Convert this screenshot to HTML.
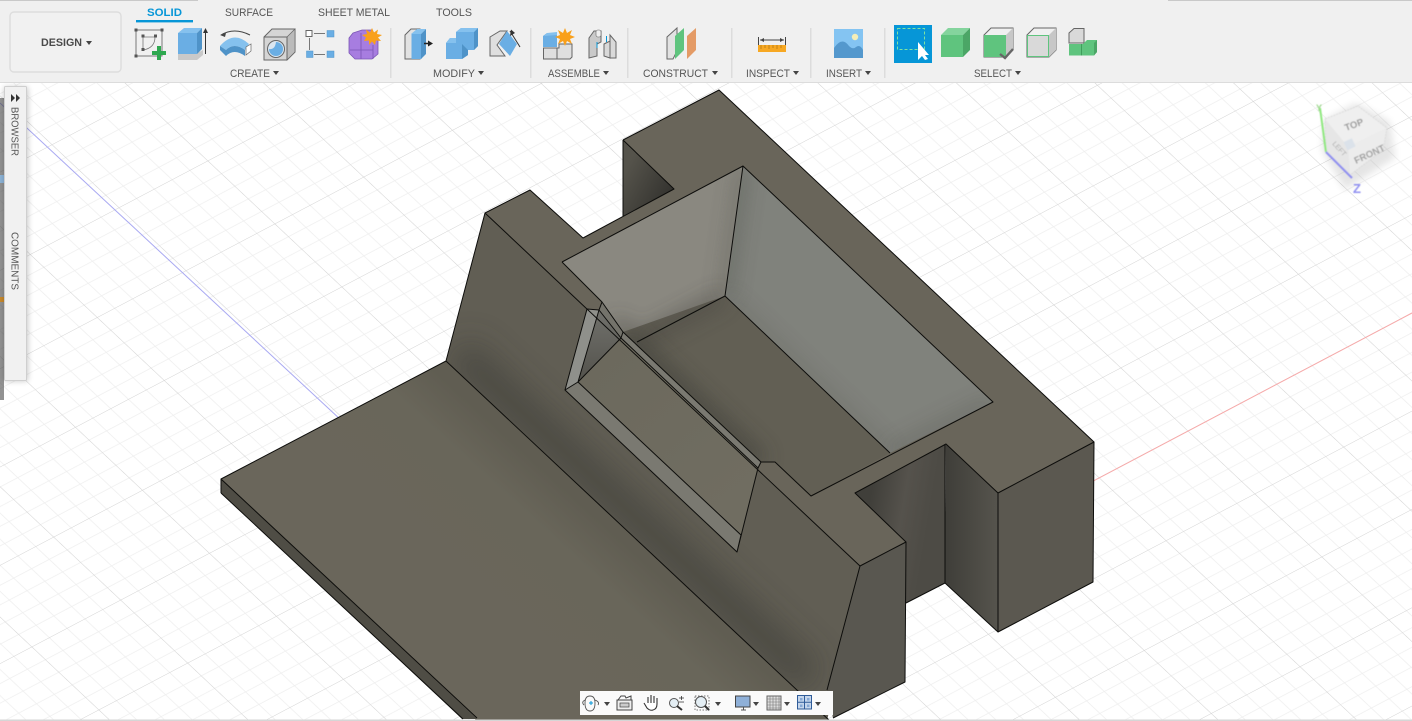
<!DOCTYPE html>
<html><head><meta charset="utf-8"><title>Design</title>
<style>
html,body{margin:0;padding:0;width:1412px;height:721px;overflow:hidden;background:#fff}
svg{display:block}
text{font-family:"Liberation Sans",sans-serif;font-size:11px;fill:#555}
.e{stroke:#0d0d0b;stroke-width:1;stroke-linejoin:round;fill:none}
</style></head><body>
<svg width="1412" height="721" viewBox="0 0 1412 721" xmlns="http://www.w3.org/2000/svg">
<defs>
<pattern id="grid" patternUnits="userSpaceOnUse" width="100" height="100" patternTransform="matrix(.888 -.468 -.67 -.63 655 712)">
<path d="M20 0V100M40 0V100M60 0V100M80 0V100M0 20H100M0 40H100M0 60H100M0 80H100" fill="none" stroke="#eeeeee" stroke-width=".8"/>
<path d="M0 0V100M0 0H100" fill="none" stroke="#d2d2d2" stroke-width="1.1"/>
</pattern>
<linearGradient id="plate" gradientUnits="userSpaceOnUse" x1="500" y1="430" x2="400" y2="540"><stop offset="0" stop-color="#605d52"/><stop offset=".3" stop-color="#69665a"/><stop offset="1" stop-color="#6a665b"/></linearGradient>
<linearGradient id="csink" gradientUnits="userSpaceOnUse" x1="610" y1="350" x2="740" y2="500"><stop offset="0" stop-color="#6c695d"/><stop offset="1" stop-color="#706d61"/></linearGradient>
<linearGradient id="tri" gradientUnits="userSpaceOnUse" x1="600" y1="315" x2="600" y2="375"><stop offset="0" stop-color="#6f6f6a"/><stop offset="1" stop-color="#56554f"/></linearGradient>
<linearGradient id="notch" gradientUnits="userSpaceOnUse" x1="870" y1="500" x2="930" y2="510"><stop offset="0" stop-color="#403f3a"/><stop offset=".55" stop-color="#55524c"/><stop offset="1" stop-color="#4d4b45"/></linearGradient>
<linearGradient id="nw2" gradientUnits="userSpaceOnUse" x1="948" y1="500" x2="998" y2="500"><stop offset="0" stop-color="#403f3a"/><stop offset="1" stop-color="#56544d"/></linearGradient>
<linearGradient id="bnotch" gradientUnits="userSpaceOnUse" x1="625" y1="170" x2="670" y2="195"><stop offset="0" stop-color="#55534b"/><stop offset="1" stop-color="#34332f"/></linearGradient>
<filter id="sh" x="-40%" y="-5%" width="180%" height="110%"><feGaussianBlur stdDeviation="3"/></filter>
<filter id="b1" x="-30%" y="-30%" width="160%" height="160%"><feGaussianBlur stdDeviation="4"/></filter>
<filter id="b10" filterUnits="userSpaceOnUse" x="200" y="80" width="1000" height="640"><feGaussianBlur stdDeviation="10"/></filter>
<filter id="b16" filterUnits="userSpaceOnUse" x="200" y="80" width="1000" height="640"><feGaussianBlur stdDeviation="16"/></filter>
<filter id="cb" x="-10%" y="-10%" width="120%" height="120%"><feGaussianBlur stdDeviation=".45"/></filter>
<clipPath id="cS"><polygon points="485,213 860,566 827,721 797,690 446,361"/></clipPath>
<clipPath id="cL"><polygon points="562,262 743,166 725,296 637,342 623,332 602,302"/></clipPath>
<clipPath id="cR"><polygon points="743,166 993,402 890,453 725,296"/></clipPath>
<clipPath id="cF"><polygon points="623,332 725,296 890,453 811,496 775,462 761,462"/></clipPath>
</defs>

<!-- viewport -->
<rect width="1412" height="721" fill="#fff"/>
<rect y="82" width="1412" height="639" fill="url(#grid)"/>
<path d="M0 103L655 712" stroke="#a9a9f2" stroke-width="1"/>
<path d="M655 712L1412 313" stroke="#f7a9a9" stroke-width="1"/>

<!-- plate -->
<polygon points="221,479 446,361 830,721 477,721" fill="url(#plate)"/>
<polygon points="221,479 221,493 462,719 477,719" fill="#4f4d45"/>
<path class="e" d="M221 493V479L446 361M221 479L477 718M221 493L463 719"/>

<!-- sloped front -->
<polygon points="485,213 860,566 827,721 797,690 446,361" fill="#615e54"/>
<g clip-path="url(#cS)"><path d="M458 352L810 680" stroke="#3d3c37" stroke-width="34" fill="none" opacity=".62" filter="url(#b16)"/></g>
<path class="e" d="M446 361L485 213M446 361L830 721"/>
<!-- right end -->
<polygon points="860,566 906,542 905,682 833,718 827,690" fill="#595750"/>
<!-- notch -->
<polygon points="855,493 946,444 945,583 906,603 906,542" fill="url(#notch)"/>
<polygon points="946,444 998,493 998,632 945,583" fill="url(#nw2)"/>
<polygon points="998,493 1094,442 1093,582 998,632" fill="#5b5850"/>
<!-- top surface -->
<polygon points="623,140 719,90 1094,442 998,493 946,444 855,493 906,542 860,566 485,213 530,190 583,238 674,189" fill="#69655a"/>
<!-- back notch -->
<polygon points="623,140 674,189 623,216" fill="url(#bnotch)"/>
<!-- pocket left wall -->
<polygon points="562,262 743,166 725,296 637,342 623,332 602,302" fill="#8a8880"/>
<g clip-path="url(#cL)">
<path d="M725 296L637 342L615 322" stroke="#44433d" stroke-width="10" fill="none" opacity=".75" filter="url(#b10)"/>
<path d="M743 166L725 296" stroke="#53524c" stroke-width="8" fill="none" opacity=".6" filter="url(#b10)"/>
</g>
<!-- pocket right wall -->
<polygon points="743,166 993,402 890,453 725,296" fill="#80827c"/>
<g clip-path="url(#cR)">
<path d="M743 166L725 296" stroke="#50524e" stroke-width="10" fill="none" opacity=".6" filter="url(#b10)"/>
<path d="M725 296L890 453" stroke="#494944" stroke-width="6" fill="none" opacity=".45" filter="url(#b10)"/>
<path d="M890 453L993 402" stroke="#4a4a45" stroke-width="8" fill="none" opacity=".5" filter="url(#b10)"/>
</g>
<!-- pocket floor -->
<polygon points="623,332 725,296 890,453 811,496 775,462 761,462" fill="#625f54"/>
<g clip-path="url(#cF)">
<path d="M725 296L637 342" stroke="#46453f" stroke-width="12" fill="none" opacity=".6" filter="url(#b10)"/>
<path d="M623 332L761 462" stroke="#41403a" stroke-width="16" fill="none" opacity=".7" filter="url(#b10)"/>
</g>
<!-- countersink -->
<polygon points="621,338 758,468 741,535 578,382" fill="url(#csink)"/>
<polygon points="565,390 578,382 741,535 737,552" fill="#7a7971"/>
<polygon points="565,390 587,309 599,310 578,382" fill="#8f908b"/>
<polygon points="599,310 621,338 578,382" fill="url(#tri)"/>
<polygon points="602,302 623,332 621,338 599,310" fill="#74736b"/>
<polygon points="623,332 761,462 758,468 621,338" fill="#7a7971"/>
<path class="e" d="M623 140L719 90L1094 442L998 493L946 444L855 493L906 542L860 566L485 213L530 190L583 238L674 189L623 140M623 140V216"/>
<path class="e" d="M562 262L743 166L993 402L811 496L775 462L761 462L758 468M562 262L602 302L623 332L761 462M743 166L725 296L890 453M725 296L637 342"/>
<path class="e" d="M587 309L565 390L737 552L741 535L578 382L599 310L587 309M599 310L602 302M599 310L621 338L578 382L565 390M623 332L621 338L758 468M737 552L758 468"/>
<path class="e" d="M1094 442L1093 582L998 632V493M998 632L945 583V444M906 542L905 682L833 718M860 566L827 690M906 603L945 583"/>

<!-- viewcube -->
<polygon points="1322,150 1345,190 1395,158 1390,122 1356,103 1325,120" fill="#000" opacity=".1" filter="url(#b1)"/>
<g filter="url(#cb)">
<polygon points="1325,119 1358,106 1387,128 1348,147" fill="#efefef"/>
<polygon points="1325,119 1348,147 1350,175 1326,152" fill="#e6e6e6"/>
<polygon points="1348,147 1387,128 1383,150 1350,175" fill="#ececec"/>
<path d="M1325 119L1358 106L1387 128L1383 150L1350 175L1326 152Z" fill="none" stroke="#d8d8d8" stroke-width=".8" stroke-dasharray="2 1"/>
<rect x="1345" y="140" width="9" height="9" fill="#dbe2ea" transform="rotate(-25 1349 144)"/>
<path d="M1320 108L1326 152" stroke="#8fe87f" stroke-width="2"/>
<path d="M1326 152L1352 178" stroke="#8f8ff0" stroke-width="2"/>
<text x="1316" y="111" style="font-size:9px;fill:#9ed88e;font-weight:bold">Y</text>
<text x="1353" y="193" style="font-size:13px;fill:#8f8ff0;font-weight:bold">Z</text>
<text transform="translate(1346,131) rotate(-20)" style="font-size:9.5px;fill:#999;font-weight:bold">TOP</text>
<text transform="translate(1356,164) rotate(-25)" style="font-size:9.5px;fill:#a0a0a0;font-weight:bold">FRONT</text>
<text transform="translate(1332,144) rotate(48)" style="font-size:7px;fill:#aaa">LEFT</text>
</g>

<!-- toolbar -->
<rect width="1412" height="82" fill="#f0f0f0"/>
<rect y="82" width="1412" height="1" fill="#dcdcdc"/>
<rect width="198" height="1" fill="#c9c9c9"/>
<rect x="1168" width="244" height="1" fill="#c9c9c9"/>
<rect x="10" y="12" width="111" height="60" rx="4" fill="#f1f1f1" stroke="#dddddd" stroke-width="1.4"/>
<text x="41" y="46" textLength="41" lengthAdjust="spacingAndGlyphs" style="font-weight:bold;fill:#4a4a4a">DESIGN</text>
<polygon points="86,41 92,41 89,45" fill="#444"/>
<text x="147" y="16" textLength="35" lengthAdjust="spacingAndGlyphs" style="font-weight:bold;fill:#0696d7">SOLID</text>
<rect x="136" y="20" width="57" height="2.4" fill="#0696d7"/>
<text x="225" y="16" textLength="48" lengthAdjust="spacingAndGlyphs">SURFACE</text>
<text x="318" y="16" textLength="72" lengthAdjust="spacingAndGlyphs">SHEET METAL</text>
<text x="436" y="16" textLength="36" lengthAdjust="spacingAndGlyphs">TOOLS</text>
<g fill="#dcdcdc"><rect x="390" y="28" width="1.5" height="50"/><rect x="530" y="28" width="1.5" height="50"/><rect x="627" y="28" width="1.5" height="50"/><rect x="731" y="28" width="1.5" height="50"/><rect x="810" y="28" width="1.5" height="50"/><rect x="884" y="28" width="1.5" height="50"/></g>
<text x="230" y="77" textLength="40" lengthAdjust="spacingAndGlyphs">CREATE</text>
<text x="433" y="77" textLength="42" lengthAdjust="spacingAndGlyphs">MODIFY</text>
<text x="548" y="77" textLength="52" lengthAdjust="spacingAndGlyphs">ASSEMBLE</text>
<text x="643" y="77" textLength="65" lengthAdjust="spacingAndGlyphs">CONSTRUCT</text>
<text x="746" y="77" textLength="44" lengthAdjust="spacingAndGlyphs">INSPECT</text>
<text x="826" y="77" textLength="36" lengthAdjust="spacingAndGlyphs">INSERT</text>
<text x="974" y="77" textLength="38" lengthAdjust="spacingAndGlyphs">SELECT</text>
<g fill="#444"><polygon points="273,71 279,71 276,75"/><polygon points="478,71 484,71 481,75"/><polygon points="603,71 609,71 606,75"/><polygon points="712,71 718,71 715,75"/><polygon points="793,71 799,71 796,75"/><polygon points="865,71 871,71 868,75"/><polygon points="1015,71 1021,71 1018,75"/></g>

<!-- sketch -->
<rect x="136" y="30" width="26" height="26" fill="none" stroke="#777" stroke-width="1"/>
<path d="M143 37H155Q155 48 143 50Z" fill="none" stroke="#777" stroke-width=".8"/>
<g fill="#555"><rect x="134.5" y="28.5" width="3" height="3"/><rect x="160.5" y="28.5" width="3" height="3"/><rect x="134.5" y="54.5" width="3" height="3"/><rect x="141.5" y="34.5" width="3" height="3"/><rect x="154" y="34.5" width="3" height="3"/><rect x="141.5" y="48" width="3" height="3"/></g>
<path d="M159 46V60M152 53H166" stroke="#2ea84f" stroke-width="4"/>
<!-- extrude -->
<polygon points="178,53 197,53 203,50 203,55 197,60 178,60" fill="#c9c9c9"/>
<polygon points="178,33 184,28 202,28 197,33" fill="#85c1ee"/>
<rect x="178" y="33" width="19" height="21" fill="#6aaee4"/>
<polygon points="197,33 202,28 202,49 197,54" fill="#4f93c8"/>
<path d="M205.5 54V31" stroke="#333" stroke-width="1"/><polygon points="205.5,28 203,33 208,33" fill="#333"/>
<!-- revolve -->
<path d="M221 35Q234 27 250 35" fill="none" stroke="#444" stroke-width="1"/><polygon points="220,35 226,33 225,37" fill="#444"/>
<path d="M220 46Q234 30 249 44L245 50Q234 42 226 50Z" fill="#85c1ee"/>
<path d="M220 46V50L226 56V50ZM226 50Q234 42 245 50V56Q234 48 226 56Z" fill="#4f93c8"/>
<polygon points="246,47 251,44 251,51 246,55" fill="#fff" stroke="#666" stroke-width=".7"/>
<!-- hole -->
<polygon points="264,37 272,29 295,29 295,52 287,60 264,60" fill="#d5d5d5" stroke="#666"/>
<polygon points="287,37 295,29 295,52 287,60" fill="#bbb" stroke="#666" stroke-width=".7"/>
<path d="M264 37H287V60" fill="none" stroke="#666"/>
<circle cx="276" cy="49" r="8.5" fill="#dbe6f0" stroke="#666"/>
<path d="M276 42A7 7 0 1 1 269 49Q275 50 276 42Z" fill="#6aaee4"/>
<!-- pattern -->
<path d="M314 33.5H325M309.5 38V50M314 54.5H325" stroke="#777"/>
<rect x="306" y="30.5" width="6" height="6" fill="#fff" stroke="#666"/><rect x="327" y="30.5" width="7" height="6.5" fill="#6aaee4" stroke="#4f93c8" stroke-width=".5"/><rect x="306.5" y="51" width="6.5" height="6.5" fill="#6aaee4" stroke="#4f93c8" stroke-width=".5"/><rect x="327" y="51" width="7" height="6.5" fill="#6aaee4" stroke="#4f93c8" stroke-width=".5"/>
<!-- purple -->
<path d="M353 33L362 30H372L378 40V54L372 59H355L349 53V38Z" fill="#a77de0" stroke="#7b55b5" stroke-width=".8"/>
<path d="M350 50H373M361 33V59M373 45V59" stroke="#7b55b5" stroke-width=".8"/>
<polygon points="372,28 374,32.5 378,29.5 377,34 382,35 378,37.5 381,41 376,40.5 375,45 372,41.5 369,45 369,40.5 364,41 366,37.5 362,35 367,34 366,29.5 370,32.5" fill="#f9a01b"/>
<!-- press pull -->
<polygon points="405,35 411,29 420,29 420,59 405,59" fill="#e2e2e2" stroke="#666"/>
<polygon points="411,34 417,29 426,29 421,34" fill="#85c1ee"/>
<rect x="411.5" y="34" width="10" height="25" fill="#6aaee4"/>
<polygon points="421,34 426,29 426,54 421,59" fill="#4f93c8"/>
<path d="M424 43.5H431" stroke="#222" stroke-width="1.5"/><polygon points="433,43.5 428,40.5 428,46.5" fill="#222"/>
<!-- fillet -->
<path d="M446 43L450 38H456V32L461 28H478V46L474 50H468V55L462 59H446Z" fill="#6aaee4"/>
<path d="M474 32V50L478 46V28Z" fill="#4f93c8"/><path d="M462 44V59L468 55V50Z" fill="#4f93c8"/>
<path d="M456 32L461 28H478L474 32ZM446 43L450 38H456V43Z" fill="#85c1ee"/>
<!-- chamfer -->
<polygon points="490,37 500,31 507,31 497,45 505,56 490,56" fill="#dfdfdf" stroke="#666"/>
<polygon points="507,31 517,44 510,56 499,44" fill="#6aaee4"/>
<path d="M510 31L520 47" stroke="#333" stroke-width="1"/><polygon points="511,29.5 510,36 515,33" fill="#333"/>
<!-- assemble -->
<path d="M543.5 48V59H570L572 57V44H559V48Z" fill="#dfdfdf" stroke="#666"/><path d="M557 48V59" stroke="#666"/>
<polygon points="543,36 547,33 557,33 557,47 543,47" fill="#6aaee4"/>
<polygon points="547,33 557,32 557,35 544,36" fill="#85c1ee"/>
<polygon points="565,28 567,33 572,30 570,35 575,37 570,39 572,44 567,41 565,46 563,41 558,44 560,39 555,37 560,35 558,30 563,33" fill="#f9a01b"/>
<!-- joint -->
<path d="M589 38L594 31H601V42L597 44V56L589 58Z" fill="#c9c9c9" stroke="#666"/>
<rect x="596" y="30" width="5" height="7" rx="2" fill="#eee" stroke="#666" stroke-width=".6"/>
<path d="M604 44L610 41V58L604 56ZM610 35L616 42V58L610 58Z" fill="#d9d9d9" stroke="#666"/>
<path d="M597 42V48M606.5 36V42" stroke="#0696d7" stroke-width="1"/>
<!-- construct -->
<polygon points="667,37 677,28 677,51 673,59 667,59" fill="#e2e2e2" stroke="#666"/>
<polygon points="675,36 675,59 684,50 684,28" fill="#5fc47e"/>
<polygon points="687,36 696,28 696,50 687,59" fill="#e49b66"/>
<!-- inspect -->
<rect x="758" y="45" width="28" height="7" fill="#f7a823"/>
<path d="M761 45V49M765 45V48M769 45V49M773 45V48M777 45V49M781 45V48" stroke="#9c6a10" stroke-width=".6"/>
<path d="M758.5 37V45M785.5 37V45M760 40H784" stroke="#444" stroke-width="1" fill="none"/>
<polygon points="760,40 764,38 764,42" fill="#444"/><polygon points="784,40 780,38 780,42" fill="#444"/>
<!-- insert -->
<rect x="834" y="29" width="29" height="29" fill="#84c4f2"/>
<path d="M834 58V48Q842 36 849 46Q853 50 856 47Q860 44 863 50V58Z" fill="#5498cd"/>
<circle cx="855" cy="37" r="3.2" fill="#f5eeb8"/>
<!-- select active -->
<rect x="894" y="25" width="38" height="38" fill="#0696d7"/>
<rect x="897.5" y="28.5" width="27" height="21" fill="none" stroke="#7fe3a1" stroke-width="1" stroke-dasharray="3 2"/>
<path d="M918 42V60L922 56L925 60L928 59L925 55H929Z" fill="#fff"/>
<!-- green cube -->
<polygon points="941,35 948,28 970,28 963,35" fill="#84d49d"/>
<rect x="941" y="35" width="22" height="22" fill="#5fc47e"/>
<polygon points="963,35 970,28 970,50 963,57" fill="#4ba666"/>
<!-- cube check -->
<polygon points="984,35 991,28 1013,28 1013,50 1006,57 984,57" fill="#f0f0f0" stroke="#666"/>
<polygon points="1006,35 1013,28 1013,50 1006,57" fill="#c7c7c7"/>
<rect x="984" y="35" width="22" height="22" fill="#5fc47e"/>
<path d="M1000 54L1005 58L1013 49" fill="none" stroke="#666" stroke-width="2.4"/>
<!-- cube face -->
<polygon points="1027,35 1034,28 1056,28 1056,50 1049,57 1027,57" fill="#f0f0f0" stroke="#666"/>
<polygon points="1049,35 1056,28 1056,50 1049,57" fill="#c7c7c7"/>
<rect x="1027.5" y="35.5" width="21" height="21" fill="#d9d9d9" stroke="#5fc47e"/>
<!-- body -->
<polygon points="1069,33 1074,28.5 1084,28.5 1084,43 1069,43" fill="#d9d9d9" stroke="#666"/>
<polygon points="1069,44 1083,44 1087,40 1097,40 1097,52 1094,55.5 1069,55.5" fill="#5fc47e"/>
<path d="M1081.5 44V55.5" stroke="#3f9e5c"/>
<polygon points="1094,43 1097,40 1097,52 1094,55.5" fill="#4ba666"/>

<!-- side panel -->
<rect x="0" y="98" width="4" height="302" fill="#4a4a4a" opacity=".6"/>
<rect x="0" y="175" width="4" height="8" fill="#8db4d8"/>
<rect x="0" y="297" width="4" height="5" fill="#c98a2c"/>
<rect x="4" y="87" width="24" height="294" fill="#000" opacity=".22" filter="url(#sh)"/>
<rect x="4.5" y="86.5" width="22" height="294" rx="1" fill="#f1f1f1" stroke="#cfcfcf"/>
<polygon points="11,94 15,98 11,102" fill="#333"/><polygon points="16,94 20,98 16,102" fill="#333"/>
<text transform="translate(11.5,107) rotate(90)" textLength="49" lengthAdjust="spacingAndGlyphs" style="font-size:10.5px;fill:#555">BROWSER</text>
<text transform="translate(11.5,232) rotate(90)" textLength="58" lengthAdjust="spacingAndGlyphs" style="font-size:10.5px;fill:#555">COMMENTS</text>

<!-- bottom -->
<rect y="719.5" width="1412" height="1.5" fill="#d6d6d6"/>
<rect x="580" y="691" width="253" height="24" fill="#fafafa"/>
<g fill="#444">
<polygon points="604,702 610,702 607,706"/><polygon points="715,702 721,702 718,706"/><polygon points="753,702 759,702 756,706"/><polygon points="784,702 790,702 787,706"/><polygon points="815,702 821,702 818,706"/>
</g>
<!-- orbit -->
<path d="M590 696Q595 696 595 703Q595 711 590 711M590 696Q585 696 585 703Q585 711 590 711M585 700Q581 702 584 705M595 700Q600 702 598 705" fill="none" stroke="#555" stroke-width=".9"/>
<path d="M589 703H593M591 701V705" stroke="#0696d7" stroke-width="1"/>
<!-- lookat -->
<rect x="617" y="700" width="15" height="10" fill="#eee" stroke="#444"/><rect x="620" y="703" width="9" height="4" fill="#ccc" stroke="#444" stroke-width=".7"/><path d="M618 700L621 696H625L626 698L631 696V700" fill="none" stroke="#444"/>
<!-- hand -->
<path d="M644 703L647 708Q650 711 653 710Q657 709 657 704V698M654 703V696M651 703V695M648 703V697" fill="#fff" stroke="#333" stroke-width="1.1"/>
<!-- zoom -->
<circle cx="674" cy="703" r="4.5" fill="#e4eef4" stroke="#555"/><path d="M677 706L682 710" stroke="#333" stroke-width="2"/><path d="M679 698H684M681.5 696V700M679 702H684" stroke="#333" stroke-width=".8"/>
<!-- fit -->
<rect x="695" y="696" width="14" height="14" fill="none" stroke="#777" stroke-dasharray="1.5 1.5"/><circle cx="701" cy="702" r="5.5" fill="#e4eef4" stroke="#555"/><path d="M705 706L709 710" stroke="#333" stroke-width="2"/>
<!-- display -->
<rect x="735.5" y="696" width="14.5" height="11" fill="#8fb0d8" stroke="#444"/><path d="M741 710H746M743.5 707V710" stroke="#555"/>
<!-- grid -->
<rect x="767" y="696" width="14" height="14" fill="#ddd" stroke="#666"/><path d="M770 696V710M773 696V710M776 696V710M779 696V710M767 699H781M767 702H781M767 705H781M767 708H781" stroke="#777" stroke-width=".6"/>
<!-- viewports -->
<rect x="797.5" y="695.5" width="14" height="13.5" fill="#c5d6ec" stroke="#2f5c99"/><path d="M804.5 696V709M798 702.3H811" stroke="#2f5c99"/><path d="M800 698H802.500V700.500H800ZM807 698H809.500V700.500H807ZM800 704.500H802.500V707H800ZM807 704.500H809.500V707H807Z" fill="#86a9d6"/>
</svg>
</body></html>
